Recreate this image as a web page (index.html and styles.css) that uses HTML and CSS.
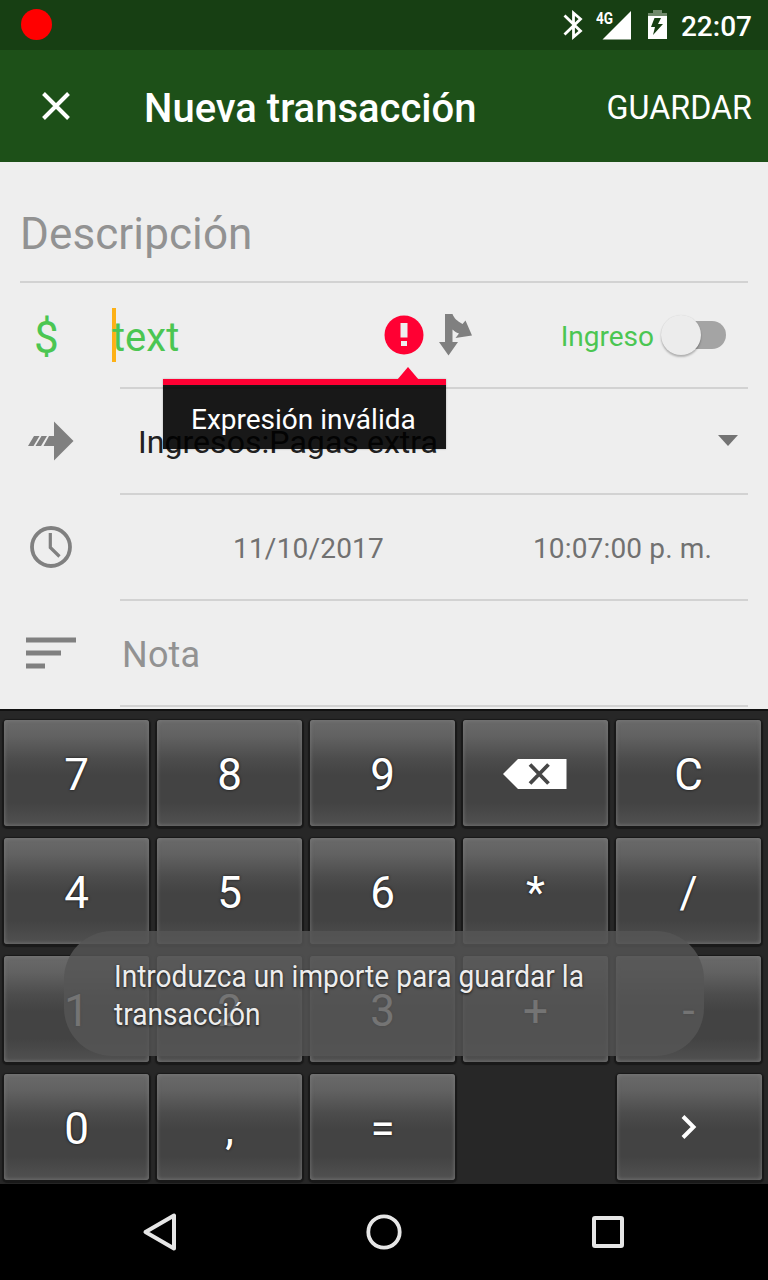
FILE: index.html
```html
<!DOCTYPE html>
<html lang="es">
<head>
<meta charset="utf-8">
<title>Nueva transacción</title>
<link rel="stylesheet" href="styles.css">
</head>
<body>
<div class="screen">
  <header class="status">
    <span class="record"></span>
    <svg class="status-icons" width="106" height="50" viewBox="0 0 106 50">
      <path d="M2.500 15.500L18.500 31l-7 6V13l7 6L2.500 34.500" fill="none" stroke="#fff" stroke-width="2.800"/>
      <path d="M40.500 39.500L69 11v28.500z" fill="#fff"/>
      <path d="M91 10h9v3h5v3H86v-3h5z" fill="#718a6c"/>
      <path fill-rule="evenodd" d="M86 16h19v23H86zM92.500 18l-3.500 9h4l-2 8 10-11h-5l3-6z" fill="#fff"/>
    </svg>
    <span class="network">4G</span>
    <span class="clock">22:07</span>
  </header>

  <div class="appbar">
    <svg class="close" width="28" height="28" viewBox="0 0 28 28"><path d="M1.500 1.500l25 25M26.500 1.500l-25 25" stroke="#fff" stroke-width="4"/></svg>
    <h1 class="title">Nueva transacción</h1>
    <span class="save">GUARDAR</span>
  </div>

  <main class="form">
    <div class="description"><span class="t-desc">Descripción</span></div>

    <div class="row">
      <div class="lead"><span class="currency">$</span></div>
      <div class="field amount">
        <span class="caret"></span>
        <span class="t-amount">text</span>
        <svg class="error" width="42" height="42" viewBox="0 0 42 42"><circle cx="21" cy="21" r="19.500" fill="#ff0033"/><path d="M17.500 9h7v14.500h-7zM18 27h6v5h-6z" fill="#eee"/></svg>
        <svg class="split" width="36" height="44" viewBox="0 0 36 44"><path d="M7 1h7.500C16 5 19 8 24.500 11l3-3.500L34 22.500 17.500 25l3.500-4.500C18 19.500 16 18 14.500 16.500V29H20L10.500 42.500 1 29h6z" fill="#808080"/></svg>
        <span class="t-income">Ingreso</span>
        <span class="switch"><span class="thumb"></span></span>
      </div>
      <div class="tooltip"><svg class="tip" width="22" height="14" viewBox="0 0 22 14"><path d="M0 14L11 1l11 13z" fill="#ff0033"/></svg><span class="t-error">Expresión inválida</span></div>
    </div>

    <div class="row">
      <div class="lead"><svg class="i-transfer" width="46" height="40" viewBox="0 0 46 40"><path d="M26 0.500L45.500 20 26 39.500V25H15.500l5.500-10h5zM6 15h5.500L5.500 25H0zM13.500 15h5.500l-6 10H7.500z" fill="#808080"/></svg></div>
      <div class="field account"><span class="t-account">Ingresos:Pagas extra</span><span class="arrow"></span></div>
    </div>

    <div class="row">
      <div class="lead"><svg class="i-clock" width="42" height="42" viewBox="0 0 42 42" fill="none" stroke="#808080"><circle cx="21" cy="21" r="19" stroke-width="3.800"/><path d="M20.300 7v14.500L29.500 30.500" stroke-width="3.200"/></svg></div>
      <div class="field dates"><span class="t-date">11/10/2017</span><span class="t-time">10:07:00 p. m.</span></div>
    </div>

    <div class="row">
      <div class="lead"><svg class="i-note" width="50" height="32" viewBox="0 0 50 32"><path d="M0 .5h50v5H0zM0 13.500h35v5H0zM0 26.500h19v5H0z" fill="#808080"/></svg></div>
      <div class="field note"><span class="t-note">Nota</span></div>
    </div>
  </main>

  <section class="keyboard">
    <div class="key">7</div><div class="key">8</div><div class="key">9</div>
    <div class="key"><svg class="i-del" width="64" height="30" viewBox="0 0 64 30"><path d="M0 15L15 0h48.500v30H15z" fill="#fff"/><path d="M27 5.500l18.500 19M45.500 5.500l-18.500 19" stroke="#474747" stroke-width="3.800"/></svg></div>
    <div class="key">C</div>
    <div class="key">4</div><div class="key">5</div><div class="key">6</div><div class="key">*</div><div class="key">/</div>
    <div class="key">1</div><div class="key">2</div><div class="key">3</div><div class="key">+</div><div class="key">-</div>
    <div class="key">0</div><div class="key">,</div><div class="key">=</div><div class="gap"></div>
    <div class="key last"><svg class="i-next" width="16" height="26" viewBox="0 0 16 26"><path d="M2 2.500L12.500 13 2 23.500" fill="none" stroke="#fff" stroke-width="4"/></svg></div>
  </section>

  <nav class="nav">
    <svg width="36" height="40" viewBox="0 0 36 40"><path d="M3.500 20L32 3.500v33z" fill="none" stroke="#e6e6e6" stroke-width="4" stroke-linejoin="round"/></svg>
    <svg width="36" height="40" viewBox="0 0 36 40"><circle cx="18" cy="20" r="15.700" fill="none" stroke="#e6e6e6" stroke-width="3.800"/></svg>
    <svg width="36" height="40" viewBox="0 0 36 40"><rect x="4" y="6" width="28" height="28" rx="1" fill="none" stroke="#e6e6e6" stroke-width="4"/></svg>
  </nav>

  <div class="toast"><p class="toast-text">Introduzca un importe para guardar la<br>transacción</p></div>
</div>
</body>
</html>
```

FILE: styles.css
```css
* { box-sizing: border-box; }
body { margin: 0; font-family: Roboto, "Noto Sans", sans-serif; color: #212121; }
svg { display: block; flex: none; }
span { white-space: nowrap; }
.screen { position: relative; width: 768px; height: 1280px; overflow: hidden; background: #eee; display: flex; flex-direction: column; }

.status { position: relative; height: 50px; background: #173f13; display: flex; align-items: center; padding: 0 16px 0 21px; color: #fff; }
.record { width: 31px; height: 31px; margin-bottom: 1px; border-radius: 50%; background: #f00; }
.status-icons { margin-left: auto; margin-right: 13px; }
.clock { font-size: 28px; font-weight: 500; line-height: 50px; padding-top: 3px; }
.network { position: absolute; left: 596px; top: 8px; font-size: 17px; line-height: 20px; font-weight: 700; transform: scaleX(.8); transform-origin: 0 0; }

.appbar { height: 112px; background: #1d5018; display: flex; align-items: center; padding: 0 16px 0 42px; color: #fff; }
.title { margin: 6px 0 0 74px; font-size: 40px; font-weight: 500; line-height: 48px; white-space: nowrap; }
.save { margin-left: auto; padding-top: 3px; font-size: 32.300px; line-height: 40px; }

.form { height: 547px; display: flex; flex-direction: column; }
.description { height: 121px; margin: 0 20px; border-bottom: 2px solid #d2d2d2; padding-top: 46px; font-size: 44px; line-height: 52px; color: #929292; letter-spacing: .1px; }
.row { position: relative; height: 106px; display: flex; padding-right: 20px; }
.lead { width: 120px; flex: none; display: flex; align-items: center; }
.field { flex: 1; border-bottom: 2px solid #d2d2d2; display: flex; align-items: center; }
.currency { margin-left: 34px; padding-top: 3px; font-size: 44px; color: #4bc652; }
.caret { width: 4px; height: 54px; margin-left: -8px; background: #fdb116; }
.t-amount { width: 272px; margin-left: -4px; padding-top: 4px; font-size: 40px; color: #4bc652; position: relative; }
.error { margin-left: -1px; }
.split { margin-left: 13px; }
.t-income { margin-left: auto; padding-top: 2px; font-size: 28px; color: #4bc652; }
.switch { width: 60px; height: 28px; margin: 0 22px 0 12px; border-radius: 14px; background: #a4a4a4; display: flex; align-items: center; }
.thumb { width: 40px; height: 40px; margin-left: -5px; border-radius: 50%; background: #ececec; box-shadow: 0 2px 2px rgba(0,0,0,.25), 0 0 1px rgba(0,0,0,.12); flex: none; }

.tooltip { position: absolute; z-index: 2; left: 163px; top: 96px; width: 283px; height: 70px; border-top: 6px solid #ff0033; background: rgba(0,0,0,.9); color: #fff; padding: 18px 28px; font-size: 28px; line-height: 33px; box-shadow: 0 0 2px rgba(0,0,0,.25); }
.tip { position: absolute; left: 234px; top: -19px; }
.i-transfer { margin: 0 0 2px 28px; }
.t-account { margin-left: 18px; padding-top: 2px; font-size: 32px; letter-spacing: .05px; }
.arrow { margin: 0 10px 1px auto; border: 10px solid transparent; border-top: 11px solid #737373; border-bottom: 0; }
.i-clock { margin: 0 0 2px 30px; }
.dates { color: #717171; font-size: 28px; }
.t-date { margin-left: 113px; padding-top: 2px; letter-spacing: .2px; }
.t-time { margin: 0 36px 0 auto; padding-top: 2px; letter-spacing: .15px; }
.i-note { margin: 0 0 2px 26px; }
.t-note { margin-left: 2px; padding-top: 4px; font-size: 36px; letter-spacing: .2px; color: #929292; }

.keyboard { height: 475px; background: #272727; border-top: 2px solid #111; padding: 9px 7px 4px 4px; display: grid; grid-template-columns: repeat(5, 145px); grid-auto-rows: 106px; gap: 12px 8px; }
.key { border-radius: 3px; display: flex; align-items: center; justify-content: center; padding-top: 4px; color: #fff; font-size: 44px; line-height: 52px; text-shadow: 0 0 3px rgba(0,0,0,.8); background: linear-gradient(#6a6a6a 0, #626262 15%, #4c4c4c 37%, #434343 52%, #434343 78%, #515151 100%); box-shadow: 0 1px 1px 2px #191919, inset 0 0 4px #7c7c7c; }
.last { margin: 0 -1px 0 1px; }
.i-del { margin: 0 2px 3px 0; }
.i-next { margin: 0 1px 5px 0; }

.nav { height: 96px; background: #000; display: flex; align-items: center; justify-content: space-between; padding: 0 142px; }
.toast { position: absolute; left: 64px; top: 931px; width: 640px; height: 125px; border-radius: 48px; background: rgba(85,85,85,.82); padding: 26px 50px; color: #ededed; }
.toast-text { margin: 0; font-size: 32px; line-height: 38px; white-space: nowrap; transform: scaleX(.878); transform-origin: 0 0; text-shadow: 0 1px 3px rgba(0,0,0,.8); }
```
